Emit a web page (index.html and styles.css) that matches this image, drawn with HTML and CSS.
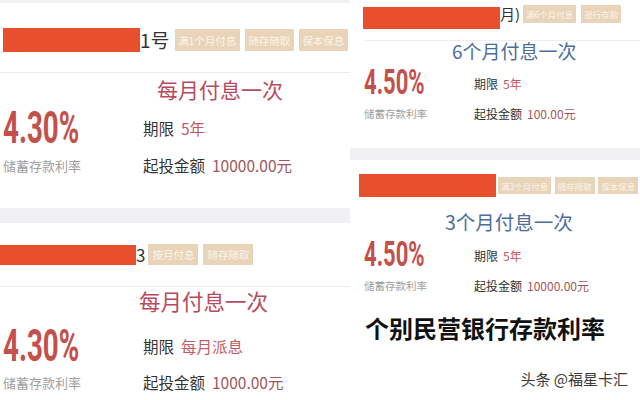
FILE: index.html
```html
<!DOCTYPE html>
<html lang="zh-CN">
<head>
<meta charset="utf-8">
<title>个别民营银行存款利率</title>
<link rel="stylesheet" href="styles.css">
</head>
<body>
<main class="collage">
  <div class="col">
    <section class="card card-a">
      <div class="topband"></div>
      <div class="head">
        <span class="redact"></span>
        <span class="name">1号</span>
        <span class="tags">
          <span class="tag">满1个月付息</span>
          <span class="tag">随存随取</span>
          <span class="tag">保本保息</span>
        </span>
      </div>
      <div class="divider"></div>
      <h2 class="title pink">每月付息一次</h2>
      <div class="rows">
        <div class="rate">4.30%</div>
        <div class="row"><span class="key">期限</span><span class="val">5年</span></div>
        <div class="label">储蓄存款利率</div>
        <div class="row"><span class="key">起投金额</span><span class="amt">10000.00元</span></div>
      </div>
    </section>
    <div class="strip strip-left"></div>
    <section class="card card-b">
      <div class="head">
        <span class="redact"></span>
        <span class="name">3</span>
        <span class="tags">
          <span class="tag">按月付息</span>
          <span class="tag">随存随取</span>
        </span>
      </div>
      <div class="divider"></div>
      <h2 class="title pink">每月付息一次</h2>
      <div class="rows">
        <div class="rate">4.30%</div>
        <div class="row"><span class="key">期限</span><span class="val">每月派息</span></div>
        <div class="label">储蓄存款利率</div>
        <div class="row"><span class="key">起投金额</span><span class="amt">1000.00元</span></div>
      </div>
    </section>
  </div>
  <div class="col">
    <section class="card card-c">
      <div class="head">
        <span class="redact"></span>
        <span class="name">月)</span>
        <span class="tags">
          <span class="tag">满6个月付息</span>
          <span class="tag">银行存款</span>
        </span>
      </div>
      <div class="divider"></div>
      <h2 class="title blue">6个月付息一次</h2>
      <div class="rows">
        <div class="rate">4.50%</div>
        <div class="row"><span class="key">期限</span><span class="val">5年</span></div>
        <div class="label">储蓄存款利率</div>
        <div class="row"><span class="key">起投金额</span><span class="amt">100.00元</span></div>
      </div>
    </section>
    <div class="strip strip-right"></div>
    <section class="card card-d">
      <div class="head">
        <span class="redact"></span>
        <span class="tags">
          <span class="tag">满3个月付息</span>
          <span class="tag">随存随取</span>
          <span class="tag">保本保息</span>
        </span>
      </div>
      <h2 class="title blue">3个月付息一次</h2>
      <div class="rows">
        <div class="rate">4.50%</div>
        <div class="row"><span class="key">期限</span><span class="val">5年</span></div>
        <div class="label">储蓄存款利率</div>
        <div class="row"><span class="key">起投金额</span><span class="amt">10000.00元</span></div>
      </div>
      <p class="caption">个别民营银行存款利率</p>
      <p class="credit">头条 @福星卡汇</p>
    </section>
  </div>
</main>
</body>
</html>
```

FILE: styles.css
```css
* { box-sizing: border-box; margin: 0; padding: 0; }
html, body { background: #fff; }
body {
  width: 640px;
  height: 400px;
  overflow: hidden;
  font-family: "Noto Sans CJK SC", "Noto Sans", sans-serif;
  color: #333;
}
.collage {
  display: grid;
  grid-template-columns: 350px 290px;
  height: 400px;
}
.col {
  display: flex;
  flex-direction: column;
  overflow: hidden;
  min-width: 0;
}
.card { background: #fff; overflow: hidden; flex: none; }
.topband { height: 3px; background: #f1f1f3; }
.head { display: flex; align-items: center; white-space: nowrap; }
.redact { background: #e8502d; flex: none; }
.name { color: #333; flex: none; }
.tags { display: flex; flex: none; }
.tag {
  display: flex;
  align-items: center;
  background: #e9d4b9;
  color: #fbf4ea;
  white-space: nowrap;
  flex: none;
}
.divider { height: 1px; background: #ededed; }
.title { font-weight: 400; white-space: nowrap; }
.pink { color: #b94a5c; }
.blue { color: #4d6e9d; }
.rows { display: grid; align-items: center; }
.rate {
  font-family: Roboto, "Noto Sans", sans-serif;
  font-weight: 700;
  color: #c4504c;
  transform: scaleX(0.63);
  transform-origin: left center;
  white-space: nowrap;
}
.label { color: #a0a0a0; white-space: nowrap; }
.row { display: flex; align-items: center; white-space: nowrap; }
.key { color: #333; }
.val { color: #c25a64; }
.amt { color: #a0585e; }
.strip { background: #f1f1f3; flex: none; }
.strip-left { height: 15px; }
.strip-right { height: 12px; }

/* card A : top left */
.card-a { height: 208px; }
.card-a .head { margin-top: 25px; height: 24px; padding-left: 3px; }
.card-a .redact { width: 137px; height: 24px; }
.card-a .name { font-size: 19px; line-height: 24px; }
.card-a .tags { margin-left: 5px; gap: 5px; }
.card-a .tag { height: 22px; font-size: 10.5px; padding: 0 3.5px; }
.card-a .divider { margin-top: 20px; }
.card-a .title { font-size: 21px; line-height: 28px; margin-top: 2px; padding-left: 157px; }
.card-a .rows { grid-template-columns: 140px auto; grid-template-rows: 40px 34px; margin-top: 5px; padding-left: 3px; }
.card-a .rate { font-size: 44px; line-height: 40px; }
.card-a .row { font-size: 15.5px; gap: 7px; }
.card-a .label { font-size: 13px; }

/* card B : bottom left */
.card-b { flex: 1; }
.card-b .head { margin-top: 21px; height: 21px; }
.card-b .redact { width: 136px; height: 20px; }
.card-b .name { font-size: 17px; line-height: 21px; }
.card-b .tags { margin-left: 3px; gap: 5px; }
.card-b .tag { height: 21px; font-size: 10.5px; padding: 0 4px; }
.card-b .divider { margin-top: 21px; }
.card-b .title { font-size: 21.5px; line-height: 28px; padding-left: 139px; }
.card-b .rows { grid-template-columns: 140px auto; grid-template-rows: 40px 32px; margin-top: 11px; padding-left: 3px; }
.card-b .rate { font-size: 44px; line-height: 40px; }
.card-b .row { font-size: 15.5px; gap: 7px; }
.card-b .label { font-size: 13px; }

/* card C : top right */
.card-c { height: 148px; }
.card-c .head { margin-top: 5px; height: 24px; padding-left: 13px; align-items: flex-start; }
.card-c .redact { width: 137px; height: 22px; margin-top: 2px; }
.card-c .name { font-size: 15px; line-height: 17px; }
.card-c .tags { margin-left: 3px; gap: 5px; }
.card-c .tag { height: 18px; font-size: 8.5px; padding: 0 3px; }
.card-c .divider { margin-top: 11px; margin-left: 15px; }
.card-c .title { font-size: 19px; line-height: 24px; margin-top: -2px; padding-left: 102px; }
.card-c .rows { grid-template-columns: 110px auto; grid-template-rows: 36px 24px; margin-top: 2px; padding-left: 14px; }
.card-c .rate { font-size: 35px; line-height: 36px; }
.card-c .row { font-size: 12px; gap: 5px; }
.card-c .label { font-size: 10.5px; }

/* card D : bottom right */
.card-d { flex: 1; }
.card-d .head { margin-top: 14px; height: 23px; padding-left: 9px; }
.card-d .redact { width: 137px; height: 23px; }
.card-d .tags { margin-left: 2px; gap: 3.5px; }
.card-d .tag { height: 17px; font-size: 8.5px; padding: 0 3px; }
.card-d .title { font-size: 19.5px; line-height: 28px; margin-top: 11px; padding-left: 95px; }
.card-d .rows { grid-template-columns: 110px auto; grid-template-rows: 36px 24px; margin-top: 1px; padding-left: 14px; }
.card-d .rate { font-size: 35px; line-height: 36px; }
.card-d .row { font-size: 12px; gap: 5px; }
.card-d .label { font-size: 10.5px; }
.caption {
  margin-top: 16px;
  padding-left: 15px;
  font-size: 24px;
  line-height: 30px;
  font-weight: 700;
  color: #111;
  white-space: nowrap;
}
.credit {
  margin-top: 26px;
  padding-right: 12px;
  text-align: right;
  font-size: 15px;
  line-height: 20px;
  color: #3a3a3a;
  white-space: nowrap;
}
```
